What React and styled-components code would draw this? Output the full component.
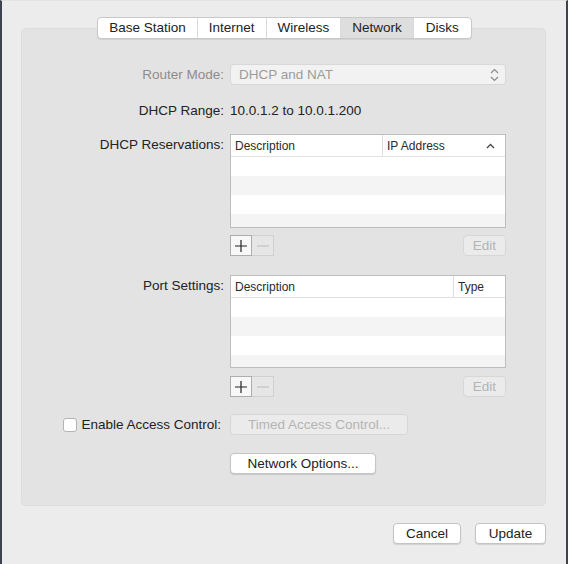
import React from 'react';
import styled, { createGlobalStyle, css } from 'styled-components';

const GlobalStyle = createGlobalStyle`
	html, body {
		margin: 0;
		padding: 0;
		background: #ececec;
	}
	body {
		font-family: "Liberation Sans", Arial, sans-serif;
		font-size: 13.5px;
		color: #222;
	}
`;

const Window = styled.div`
	width: 568px;
	height: 564px;
	box-sizing: border-box;
	background: #ececec;
	border-left: 2px solid #3d434d;
	border-right: 2px solid #3d434d;
	border-top: 1px solid #e2e2e2;
	padding: 16px 20px 0 19px;
	display: flex;
	flex-direction: column;
`;

const TabBar = styled.div`
	align-self: center;
	display: flex;
	margin-bottom: -11px;
	margin-left: 2px;
	position: relative;
	z-index: 1;
	background: #fff;
	border: 1px solid #c8c8c8;
	border-radius: 4px;
	box-shadow: 0 1px 1px rgba(0, 0, 0, 0.08);
	overflow: hidden;
`;

const Tab = styled.div`
	height: 20px;
	line-height: 20px;
	padding: 0 ${(p) => p.$pad}px;
	border-left: 1px solid #dadada;
	&:first-child {
		border-left: none;
	}
	${(p) =>
		p.$active &&
		css`
			background: #dedede;
		`}
`;

const Panel = styled.div`
	background: #e3e3e3;
	border-radius: 5px;
	border: 1px solid #dcdcdc;
	padding: 35px 0 31px 0;
	display: flex;
	flex-direction: column;
`;

const Row = styled.div`
	display: grid;
	grid-template-columns: 202px 276px;
	column-gap: 6px;
	margin-top: ${(p) => p.$gap || 0}px;
	align-items: ${(p) => (p.$top ? 'start' : 'center')};
`;

const Label = styled.div`
	color: ${(p) => (p.$disabled ? '#8d8d8d' : '#222')};
	white-space: nowrap;
	line-height: 21px;
	display: flex;
	justify-content: flex-end;
	align-items: center;
	gap: 4px;
	padding-right: ${(p) => p.$inset || 0}px;
`;

const Popup = styled.div`
	height: 21px;
	box-sizing: border-box;
	background: #f2f2f2;
	border: 1px solid #d8d8d8;
	border-radius: 4px;
	color: #9c9c9c;
	padding: 0 6px 0 8px;
	display: flex;
	align-items: center;
	justify-content: space-between;
`;

const Value = styled.div`
	line-height: 21px;
`;

const Table = styled.div`
	border: 1px solid #bdbdbd;
	height: ${(p) => p.$h}px;
	box-sizing: border-box;
	background: #f4f4f4;
	display: flex;
	flex-direction: column;
	overflow: hidden;
`;

const Header = styled.div`
	display: grid;
	grid-template-columns: ${(p) => p.$cols};
	height: 21px;
	flex-shrink: 0;
	background: #fff;
	border-bottom: 1px solid #e2e2e2;
	font-size: 12px;
	color: #2a2a2a;
`;

const HeadCell = styled.div`
	display: flex;
	align-items: center;
	justify-content: space-between;
	padding: 0 10px 0 4px;
	& + & {
		border-left: 1px solid #dedede;
	}
`;

const TableRow = styled.div`
	height: 19px;
	flex-shrink: 0;
	background: ${(p) => (p.$odd ? '#f4f4f4' : '#fff')};
`;

const ButtonBar = styled.div`
	display: flex;
	justify-content: space-between;
	align-items: center;
`;

const Segmented = styled.div`
	display: flex;
	height: 21px;
`;

const SegButton = styled.div`
	width: 22px;
	box-sizing: border-box;
	display: flex;
	align-items: center;
	justify-content: center;
	background: ${(p) => (p.$disabled ? '#e6e6e6' : '#f8f8f8')};
	border: 1px solid ${(p) => (p.$disabled ? '#d0d0d0' : '#adadad')};
	& + & {
		border-left: none;
	}
`;

const Button = styled.div`
	height: 21px;
	box-sizing: border-box;
	width: ${(p) => p.$w}px;
	display: flex;
	align-items: center;
	justify-content: center;
	border-radius: 4px;
	${(p) =>
		p.$disabled
			? css`
					background: #ebebeb;
					border: 1px solid #d7d7d7;
					color: #b4b4b4;
			  `
			: css`
					background: #fff;
					border: 1px solid #c4c4c4;
					color: #222;
					box-shadow: 0 1px 1px rgba(0, 0, 0, 0.12);
			  `}
`;

const Checkbox = styled.span`
	width: 14px;
	height: 14px;
	box-sizing: border-box;
	border: 1px solid #b4b4b4;
	border-radius: 3px;
	background: #fff;
`;

const Footer = styled.div`
	display: flex;
	justify-content: flex-end;
	gap: 14px;
	margin-top: 17px;
`;

const Chevrons = () => (
	<svg width="9" height="14" viewBox="0 0 9 14" fill="none" stroke="#8a8a8a" strokeWidth="1.2">
		<path d="M1 5 L4.5 1.5 L8 5" />
		<path d="M1 9 L4.5 12.5 L8 9" />
	</svg>
);

const Caret = () => (
	<svg width="9" height="6" viewBox="0 0 9 6" fill="none" stroke="#444" strokeWidth="1.3">
		<path d="M1 5 L4.5 1.5 L8 5" />
	</svg>
);

const Plus = () => (
	<svg width="12" height="12" viewBox="0 0 12 12" stroke="#222" strokeWidth="1.2">
		<path d="M6 0 V12 M0 6 H12" />
	</svg>
);

const Minus = () => (
	<svg width="12" height="12" viewBox="0 0 12 12" stroke="#c2c2c2" strokeWidth="1.2">
		<path d="M0 6 H12" />
	</svg>
);

function ListTable({ cols, height, headers, rows }) {
	return (
		<Table $h={height}>
			<Header $cols={cols}>
				{headers.map((h) => (
					<HeadCell key={h.name}>
						<span>{h.name}</span>
						{h.sorted && <Caret />}
					</HeadCell>
				))}
			</Header>
			{Array.from({ length: rows }).map((_, i) => (
				<TableRow key={i} $odd={i % 2 === 1} />
			))}
		</Table>
	);
}

function AddRemove() {
	return (
		<ButtonBar>
			<Segmented>
				<SegButton>
					<Plus />
				</SegButton>
				<SegButton $disabled>
					<Minus />
				</SegButton>
			</Segmented>
			<Button $w={43} $disabled>
				Edit
			</Button>
		</ButtonBar>
	);
}

const tabs = [
	{ name: 'Base Station', pad: 11 },
	{ name: 'Internet', pad: 11 },
	{ name: 'Wireless', pad: 11 },
	{ name: 'Network', pad: 11, active: true },
	{ name: 'Disks', pad: 12 },
];

export default function App() {
	return (
		<Window>
			<GlobalStyle />
			<TabBar>
				{tabs.map((t) => (
					<Tab key={t.name} $pad={t.pad} $active={t.active}>
						{t.name}
					</Tab>
				))}
			</TabBar>
			<Panel>
				<Row>
					<Label $disabled>Router Mode:</Label>
					<Popup>
						<span>DHCP and NAT</span>
						<Chevrons />
					</Popup>
				</Row>
				<Row $gap={15}>
					<Label>DHCP Range:</Label>
					<Value>10.0.1.2 to 10.0.1.200</Value>
				</Row>
				<Row $gap={13} $top>
					<Label>DHCP Reservations:</Label>
					<ListTable
						height={94}
						cols="151px 1fr"
						rows={5}
						headers={[{ name: 'Description' }, { name: 'IP Address', sorted: true }]}
					/>
				</Row>
				<Row $gap={7}>
					<span />
					<AddRemove />
				</Row>
				<Row $gap={19} $top>
					<Label>Port Settings:</Label>
					<ListTable
						height={93}
						cols="222px 1fr"
						rows={5}
						headers={[{ name: 'Description' }, { name: 'Type' }]}
					/>
				</Row>
				<Row $gap={8}>
					<span />
					<AddRemove />
				</Row>
				<Row $gap={17}>
					<Label $inset={3}>
						<Checkbox />
						Enable Access Control:
					</Label>
					<Button $w={178} $disabled>
						Timed Access Control...
					</Button>
				</Row>
				<Row $gap={18}>
					<span />
					<Button $w={146}>Network Options...</Button>
				</Row>
			</Panel>
			<Footer>
				<Button $w={68}>Cancel</Button>
				<Button $w={71}>Update</Button>
			</Footer>
		</Window>
	);
}
